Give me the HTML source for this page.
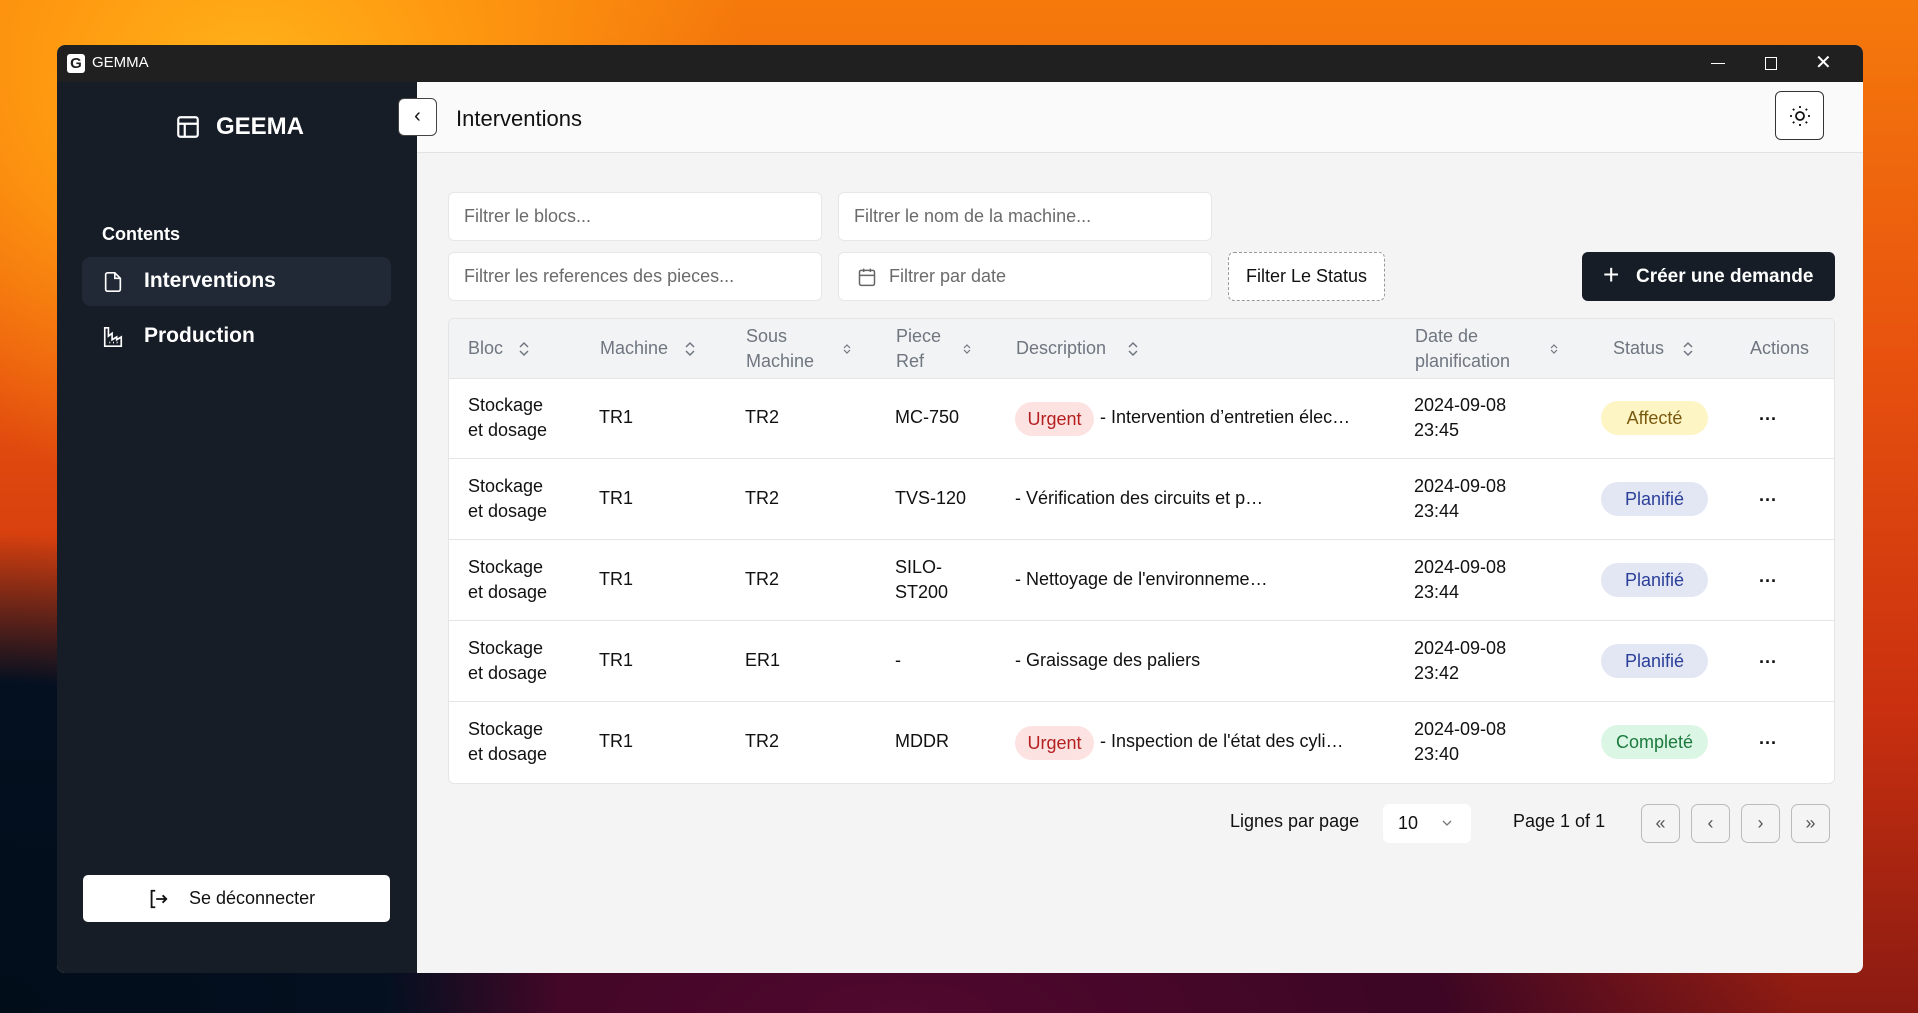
<!DOCTYPE html>
<html><head><meta charset="utf-8"><style>
*{box-sizing:border-box;margin:0;padding:0}
body{width:1918px;height:1013px;overflow:hidden;position:relative;font-family:"Liberation Sans",sans-serif;
background:
radial-gradient(ellipse 500px 420px at 250px 80px,#ffb21a 0%,#ff9a10 40%,rgba(255,140,0,0) 100%),
radial-gradient(ellipse 700px 600px at 0px 1013px,#020d1a 0%,#041020 55%,rgba(4,16,32,0) 80%),
radial-gradient(ellipse 900px 300px at 900px 1013px,#50082e 0%,#3c0624 60%,rgba(60,6,36,0) 100%),
linear-gradient(180deg,#f57a0c 0%,#e8520e 35%,#c9300f 70%,#8a1a12 100%);}
.abs{position:absolute}
.win{left:57px;top:45px;width:1806px;height:928px;border-radius:8px;overflow:hidden;background:#f4f4f4}
.tb{left:0;top:0;width:100%;height:37px;background:#202020;color:#fff;font-size:15px}
.side{left:0;top:37px;width:360px;height:891px;background:#161d26}
.hdr{left:360px;top:37px;width:1446px;height:71px;background:#fafafa;border-bottom:1px solid #e2e2e2}
.inp{background:#fff;border:1px solid #e7e7e7;border-radius:6px;height:49px;color:#6b6b6b;font-size:18px;line-height:47px;padding-left:15px}
.th{color:#6f7680;font-size:18px;line-height:25px}
.cell{font-size:18px;color:#111;line-height:25px}
.badge{border-radius:20px;font-size:18px;height:34px;line-height:34px;text-align:center}
.pb{width:39px;height:39px;border:1px solid #bbb;border-radius:7px;background:#f4f4f4;text-align:center;line-height:36px;color:#555;font-size:18px}
.dots{font-weight:bold}
</style></head><body>
<div class="abs win">
 <div class="abs tb">
  <div class="abs" style="left:10px;top:9px;width:18px;height:19px;background:#fff;border-radius:3px;color:#202020;font-weight:bold;font-size:15px;text-align:center;line-height:19px">G</div>
  <div class="abs" style="left:35px;top:9px">GEMMA</div>
  <div class="abs" style="left:1654px;top:18px;width:14px;height:1px;background:#fff"></div>
  <div class="abs" style="left:1708px;top:12px;width:12px;height:13px;border:1.5px solid #fff"></div>
  <div class="abs" style="left:1758px;top:5px;font-size:20px">✕</div>
 </div>
 <div class="abs side">
  <svg class="abs" style="left:118px;top:32px" width="26" height="26" viewBox="0 0 24 24" fill="none" stroke="#fff" stroke-width="2"><rect x="3" y="3" width="18" height="18" rx="2"/><path d="M3 9h18M9 9v12"/></svg>
  <div class="abs" style="left:159px;top:31px;color:#fff;font-weight:bold;font-size:24px">GEEMA</div>
  <div class="abs" style="left:45px;top:142px;color:#fff;font-size:18px;font-weight:bold">Contents</div>
  <div class="abs" style="left:25px;top:175px;width:309px;height:49px;background:#212836;border-radius:8px"></div>
  <svg class="abs" style="left:45px;top:189px" width="22" height="22" viewBox="0 0 24 24" fill="none" stroke="#fff" stroke-width="1.8"><path d="M14 2H6a2 2 0 0 0-2 2v16a2 2 0 0 0 2 2h12a2 2 0 0 0 2-2V8z M14 2v6h6"/></svg>
  <div class="abs" style="left:87px;top:187px;color:#fff;font-size:21px;font-weight:bold">Interventions</div>
  <svg class="abs" style="left:45px;top:244px" width="22" height="22" viewBox="0 0 24 24" fill="none" stroke="#fff" stroke-width="1.8"><path d="M3 2v20h18V12l-5 3v-3l-5 3V8L7 11V2z M8 18h1M12 18h1M16 18h1"/></svg>
  <div class="abs" style="left:87px;top:242px;color:#fff;font-size:21px;font-weight:bold">Production</div>
  <div class="abs" style="left:26px;top:793px;width:307px;height:47px;background:#fff;border-radius:5px"></div>
  <svg class="abs" style="left:90px;top:806px" width="22" height="22" viewBox="0 0 24 24" fill="none" stroke="#111" stroke-width="2"><path d="M9 3H5v18h4M10 12h11M17 8l4 4-4 4"/></svg>
  <div class="abs" style="left:132px;top:806px;font-size:18px;color:#111">Se déconnecter</div>
 </div>
 <div class="abs hdr">
  <div class="abs" style="left:39px;top:24px;font-size:22px;color:#111">Interventions</div>
  <div class="abs" style="left:1358px;top:9px;width:49px;height:49px;border:1px solid #333;border-radius:6px;background:#fff"></div>
  <svg class="abs" style="left:1371px;top:22px" width="24" height="24" viewBox="0 0 24 24" fill="none" stroke="#111" stroke-width="1.8"><circle cx="12" cy="12" r="4"/><path d="M12 2v2M12 20v2M4.9 4.9l1.4 1.4M17.7 17.7l1.4 1.4M2 12h2M20 12h2M4.9 19.1l1.4-1.4M17.7 6.3l1.4-1.4"/></svg>
 </div>
 <div class="abs" style="left:341px;top:53px;width:39px;height:38px;background:#fff;border:1px solid #444;border-radius:6px;text-align:center;line-height:34px;font-size:20px;color:#111">‹</div>

 <div class="abs inp" style="left:391px;top:147px;width:374px">Filtrer le blocs...</div>
 <div class="abs inp" style="left:781px;top:147px;width:374px">Filtrer le nom de la machine...</div>
 <div class="abs inp" style="left:391px;top:207px;width:374px">Filtrer les references des pieces...</div>
 <div class="abs inp" style="left:781px;top:207px;width:374px;padding-left:50px">Filtrer par date</div>
 <svg class="abs" style="left:800px;top:222px" width="20" height="20" viewBox="0 0 24 24" fill="none" stroke="#666" stroke-width="1.8"><rect x="3" y="4" width="18" height="18" rx="2"/><path d="M16 2v4M8 2v4M3 10h18"/></svg>
 <div class="abs" style="left:1171px;top:207px;width:157px;height:49px;border:1px dashed #999;border-radius:6px;background:#fff;font-size:18px;line-height:47px;text-align:center;color:#111">Filter Le Status</div>
 <div class="abs" style="left:1525px;top:207px;width:253px;height:49px;background:#161d26;border-radius:6px;color:#fff;font-size:19px;font-weight:bold;line-height:49px;padding-left:54px">Créer une demande</div>
 <div class="abs" style="left:1546px;top:216px;color:#fff;font-size:28px;line-height:28px">+</div>

 <div class="abs" style="left:391px;top:273px;width:1387px;height:466px;background:#fff;border:1px solid #e5e5e5;border-radius:6px;overflow:hidden">
  <div class="abs" style="left:0;top:0;width:100%;height:60px;background:#f2f3f5;border-bottom:1px solid #e4e4e4"></div>
  <div class="abs th" style="left:19px;top:17px">Bloc</div>
  <div class="abs th" style="left:151px;top:17px">Machine</div>
  <div class="abs th" style="left:297px;top:5px">Sous<br>Machine</div>
  <div class="abs th" style="left:447px;top:5px">Piece<br>Ref</div>
  <div class="abs th" style="left:567px;top:17px">Description</div>
  <div class="abs th" style="left:966px;top:5px">Date de<br>planification</div>
  <div class="abs th" style="left:1164px;top:17px">Status</div>
  <div class="abs th" style="left:1301px;top:17px">Actions</div>
  <svg class="abs" style="left:68px;top:21px" width="14" height="18" viewBox="0 0 14 18" fill="none" stroke="#6f7680" stroke-width="1.5"><path d="M3 7l4-4 4 4M3 11l4 4 4-4"/></svg>
  <svg class="abs" style="left:234px;top:21px" width="14" height="18" viewBox="0 0 14 18" fill="none" stroke="#6f7680" stroke-width="1.5"><path d="M3 7l4-4 4 4M3 11l4 4 4-4"/></svg>
  <svg class="abs" style="left:393px;top:24px" width="10" height="12" viewBox="0 0 10 12" fill="none" stroke="#6f7680" stroke-width="1.2"><path d="M2 5l3-3 3 3M2 7l3 3 3-3"/></svg>
  <svg class="abs" style="left:513px;top:24px" width="10" height="12" viewBox="0 0 10 12" fill="none" stroke="#6f7680" stroke-width="1.2"><path d="M2 5l3-3 3 3M2 7l3 3 3-3"/></svg>
  <svg class="abs" style="left:677px;top:21px" width="14" height="18" viewBox="0 0 14 18" fill="none" stroke="#6f7680" stroke-width="1.5"><path d="M3 7l4-4 4 4M3 11l4 4 4-4"/></svg>
  <svg class="abs" style="left:1100px;top:24px" width="10" height="12" viewBox="0 0 10 12" fill="none" stroke="#6f7680" stroke-width="1.2"><path d="M2 5l3-3 3 3M2 7l3 3 3-3"/></svg>
  <svg class="abs" style="left:1232px;top:21px" width="14" height="18" viewBox="0 0 14 18" fill="none" stroke="#6f7680" stroke-width="1.5"><path d="M3 7l4-4 4 4M3 11l4 4 4-4"/></svg>
 </div>
</div>
<div class="abs" style="left:448px;top:378px">
 <div class="abs" style="left:0;top:0;width:1387px">
  <div class="abs cell" style="left:20px;top:15px">Stockage<br>et dosage</div><div class="abs cell" style="left:151px;top:27px">TR1</div><div class="abs cell" style="left:297px;top:27px">TR2</div><div class="abs cell" style="left:447px;top:27px">MC-750</div>
  <div class="abs badge" style="left:567px;top:24px;width:79px;background:#fde2e2;color:#b42020">Urgent</div><div class="abs cell" style="left:652px;top:27px">- Intervention d’entretien élec…</div>
  <div class="abs cell" style="left:966px;top:15px">2024-09-08<br>23:45</div><div class="abs badge" style="left:1153px;top:23px;width:107px;background:#fdf5c4;color:#7a5a10">Affecté</div><div class="abs cell dots" style="left:1311px;top:29px">···</div>
  <div class="abs" style="left:0;top:80px;width:1387px;height:1px;background:#e5e5e5"></div>
  <div class="abs cell" style="left:20px;top:96px">Stockage<br>et dosage</div><div class="abs cell" style="left:151px;top:108px">TR1</div><div class="abs cell" style="left:297px;top:108px">TR2</div><div class="abs cell" style="left:447px;top:108px">TVS-120</div>
  <div class="abs cell" style="left:567px;top:108px">- Vérification des circuits et p…</div>
  <div class="abs cell" style="left:966px;top:96px">2024-09-08<br>23:44</div><div class="abs badge" style="left:1153px;top:104px;width:107px;background:#e3e6f3;color:#2a3f99">Planifié</div><div class="abs cell dots" style="left:1311px;top:110px">···</div>
  <div class="abs" style="left:0;top:161px;width:1387px;height:1px;background:#e5e5e5"></div>
  <div class="abs cell" style="left:20px;top:177px">Stockage<br>et dosage</div><div class="abs cell" style="left:151px;top:189px">TR1</div><div class="abs cell" style="left:297px;top:189px">TR2</div><div class="abs cell" style="left:447px;top:177px">SILO-<br>ST200</div>
  <div class="abs cell" style="left:567px;top:189px">- Nettoyage de l'environneme…</div>
  <div class="abs cell" style="left:966px;top:177px">2024-09-08<br>23:44</div><div class="abs badge" style="left:1153px;top:185px;width:107px;background:#e3e6f3;color:#2a3f99">Planifié</div><div class="abs cell dots" style="left:1311px;top:191px">···</div>
  <div class="abs" style="left:0;top:242px;width:1387px;height:1px;background:#e5e5e5"></div>
  <div class="abs cell" style="left:20px;top:258px">Stockage<br>et dosage</div><div class="abs cell" style="left:151px;top:270px">TR1</div><div class="abs cell" style="left:297px;top:270px">ER1</div><div class="abs cell" style="left:447px;top:270px">-</div>
  <div class="abs cell" style="left:567px;top:270px">- Graissage des paliers</div>
  <div class="abs cell" style="left:966px;top:258px">2024-09-08<br>23:42</div><div class="abs badge" style="left:1153px;top:266px;width:107px;background:#e3e6f3;color:#2a3f99">Planifié</div><div class="abs cell dots" style="left:1311px;top:272px">···</div>
  <div class="abs" style="left:0;top:323px;width:1387px;height:1px;background:#e5e5e5"></div>
  <div class="abs cell" style="left:20px;top:339px">Stockage<br>et dosage</div><div class="abs cell" style="left:151px;top:351px">TR1</div><div class="abs cell" style="left:297px;top:351px">TR2</div><div class="abs cell" style="left:447px;top:351px">MDDR</div>
  <div class="abs badge" style="left:567px;top:348px;width:79px;background:#fde2e2;color:#b42020">Urgent</div><div class="abs cell" style="left:652px;top:351px">- Inspection de l'état des cyli…</div>
  <div class="abs cell" style="left:966px;top:339px">2024-09-08<br>23:40</div><div class="abs badge" style="left:1153px;top:347px;width:107px;background:#dcf6e6;color:#1b7a3c">Completé</div><div class="abs cell dots" style="left:1311px;top:353px">···</div>
 </div>
</div>
<div class="abs" style="left:1230px;top:811px;font-size:18px;color:#111">Lignes par page</div>
<div class="abs" style="left:1383px;top:804px;width:88px;height:39px;background:#fff;border-radius:6px;font-size:18px;line-height:39px;padding-left:15px;color:#111">10<svg style="position:absolute;left:58px;top:15px" width="12" height="9" viewBox="0 0 12 9" fill="none" stroke="#777" stroke-width="1.3"><path d="M2 2l4 4 4-4"/></svg></div>
<div class="abs" style="left:1513px;top:811px;font-size:18px;color:#111">Page 1 of 1</div>
<div class="abs pb" style="left:1641px;top:804px">«</div>
<div class="abs pb" style="left:1691px;top:804px">‹</div>
<div class="abs pb" style="left:1741px;top:804px">›</div>
<div class="abs pb" style="left:1791px;top:804px">»</div>
</body></html>
